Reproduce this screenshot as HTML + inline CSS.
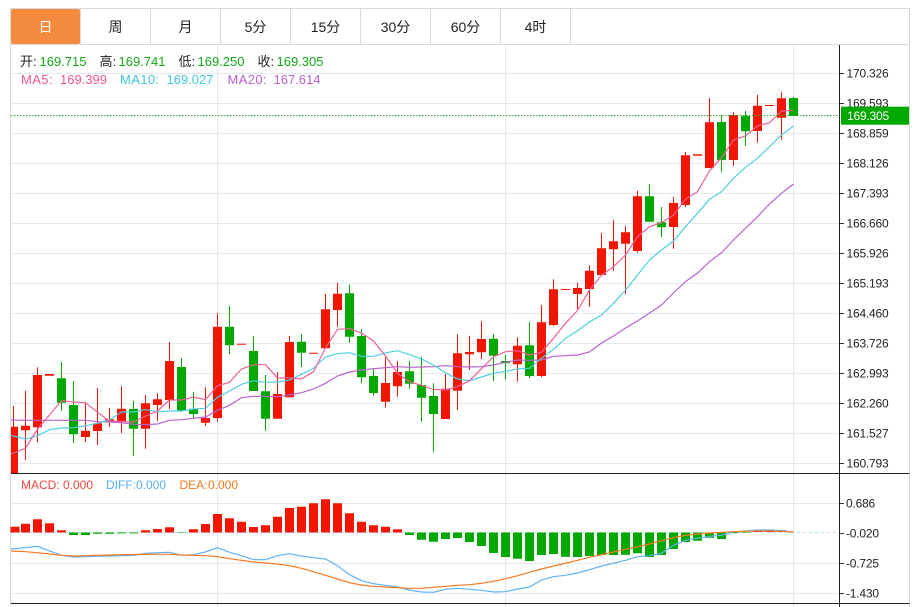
<!DOCTYPE html>
<html><head><meta charset="utf-8"><style>
html,body{margin:0;padding:0;background:#fff;width:916px;height:607px;overflow:hidden}
svg{display:block}
text{font-family:"Liberation Sans","Noto Sans CJK SC",sans-serif}
.ax{font-size:12px;fill:#222;letter-spacing:-.2px}
.h{font-size:13px}
.ml{font-size:13px;letter-spacing:.4px}
.t{font-size:14px;fill:#222;text-anchor:middle}
.m{font-size:12px}
</style></head><body>
<svg width="916" height="607" viewBox="0 0 916 607" xmlns="http://www.w3.org/2000/svg">
<defs><clipPath id="c"><rect x="11" y="45" width="828" height="428"/></clipPath></defs>
<rect width="916" height="607" fill="#fff"/>
<!-- frame -->
<path d="M10.5 607V8.5H909.5V607M10.5 44.5H909.5M80.5 9V44M150.5 9V44M220.5 9V44M290.5 9V44M360.5 9V44M430.5 9V44M500.5 9V44M570.5 9V44" fill="none" stroke="#d9d9d9"/>
<rect x="11" y="9" width="69" height="35" rx="2" fill="#f58b3f"/>
<text class="t" x="45.5" y="32" style="fill:#fff">日</text>
<text class="t" x="115.5" y="32">周</text>
<text class="t" x="185.5" y="32">月</text>
<text class="t" x="255.5" y="32">5分</text>
<text class="t" x="325.5" y="32">15分</text>
<text class="t" x="395.5" y="32">30分</text>
<text class="t" x="465.5" y="32">60分</text>
<text class="t" x="535.5" y="32">4时</text>
<!-- grid -->
<path d="M11 73.5H839M11 103.5H839M11 133.5H839M11 163.5H839M11 193.5H839M11 223.5H839M11 253.5H839M11 283.5H839M11 313.5H839M11 343.5H839M11 373.5H839M11 403.5H839M11 433.5H839M11 463.5H839M11 503.5H839M11 563.5H839M11 593.5H839M217.5 45V607M505.5 45V607M793.5 45V607" fill="none" stroke="#e3e9ee"/>
<!-- candles -->
<g clip-path="url(#c)">
<path fill="none" stroke="#f31500" d="M13.5 406V473M25.5 390.7V460M37.5 367.3V442.3M85.5 403.3V442M97.5 388V445M109.5 407.7V427M121.5 386.3V433M145.5 395V448.7M157.5 393.3V421M169.5 342V409M205.5 387.3V425.7M217.5 313.3V421.7M277.5 372.3V418.7M289.5 336V397.3M325.5 294V348.3M337.5 282.7V326.7M385.5 357.3V407.7M397.5 361.3V396.7M445.5 374V419M457.5 334.3V410M469.5 335.7V369.7M481.5 321.3V359M517.5 337.3V381.3M541.5 305V377.3M553.5 279.3V326M577.5 282.7V309.3M589.5 265.3V306.7M601.5 233V275M613.5 220.3V270.7M625.5 226V294M637.5 190.7V252.7M673.5 196.7V248.7M685.5 152V207M709.5 98.3V168M733.5 112.3V165.7M757.5 94.7V142.7M781.5 92.3V139.7"/>
<path fill="none" stroke="#f31500" stroke-width="9" d="M13.5 426.7V473M25.5 425.7V430.3M37.5 375V427.3M49.5 374V375.7M85.5 430.7V437M97.5 423.3V431M109.5 419.3V421.3M121.5 408.7V421.3M145.5 403.3V428.7M157.5 399.3V405M169.5 361V400M205.5 418V422.7M217.5 326.7V418M241.5 343.7V344.7M277.5 394V418.7M289.5 342V397.3M313.5 352.7V353.7M325.5 309.3V348.3M337.5 293.7V310M385.5 383V401.7M397.5 372V386.3M445.5 388.7V419M457.5 353.3V390.7M469.5 352V354.3M481.5 339V352.3M517.5 345.7V364.3M541.5 322.3V376M553.5 289.3V325M565.5 289V290M577.5 288V294M589.5 270.7V289M601.5 248.3V275M613.5 241.3V249.3M625.5 232.3V243.7M637.5 196.3V251M673.5 203V227M685.5 155.3V205M697.5 154.3V155.7M709.5 122.3V168M733.5 115V160M757.5 105.7V131M769.5 105V106M781.5 98.3V117.7"/>
<path fill="none" stroke="#00a800" d="M61.5 362V410.7M73.5 381V443M133.5 401V455.7M181.5 358.3V411.7M193.5 391.7V418.3M229.5 306V354.3M253.5 336V391M265.5 375V430.7M301.5 334.3V367M349.5 284.7V342.7M361.5 329.3V383.3M373.5 369.3V395.7M409.5 360.7V388.7M421.5 356.7V421.7M433.5 383.3V451.7M493.5 334.3V381M505.5 355V379.3M529.5 322V378.3M649.5 184V221.7M661.5 207V237M721.5 115.3V171.7M745.5 111V145.7M793.5 97V116"/>
<path fill="none" stroke="#00a800" stroke-width="9" d="M61.5 378.3V402.7M73.5 405V434.3M133.5 409V428.7M181.5 367V411M193.5 408.7V414M229.5 326.7V345.3M253.5 351V391M265.5 391.3V418.7M301.5 341.7V352.7M349.5 293.3V336.7M361.5 336V377.3M373.5 376V393M409.5 371.3V383.7M421.5 385V397.7M433.5 396V414M493.5 338.7V355.7M505.5 361V363.3M529.5 345.3V376M649.5 196.3V221.7M661.5 222.3V227.3M721.5 122V160M745.5 116V131.3M793.5 98V116"/>
<!-- MA -->
<polyline fill="none" stroke="#b862cf" stroke-width="1.2" points="11,420 25.5,420.3 49.5,420.3 73.5,420.3 85.5,420.3 97.5,421.7 109.5,422 121.5,422.7 133.5,424.3 145.5,424.7 157.5,424 169.5,420.3 181.5,419.7 193.5,418.3 205.5,417 217.5,410.3 229.5,405.3 241.5,397.7 253.5,396.3 265.5,396.3 277.5,396.7 289.5,395 301.5,392.7 313.5,389 325.5,383.3 337.5,376 349.5,372 361.5,370 373.5,368.7 385.5,367.7 397.5,366.7 409.5,367.3 421.5,367 433.5,366.7 445.5,365.7 457.5,366.7 469.5,367 481.5,366.7 493.5,365 505.5,362.3 517.5,360 529.5,360.3 541.5,360 553.5,356.3 565.5,355.7 577.5,355 589.5,352 601.5,343 613.5,336 625.5,328 637.5,321 649.5,313 661.5,305 673.5,293 685.5,281.7 697.5,273 709.5,261.7 721.5,252.7 733.5,240 745.5,228.3 757.5,216.7 769.5,204 781.5,193.3 793.5,184"/>
<polyline fill="none" stroke="#4dd0e4" stroke-width="1.2" points="11,435.5 25.5,439 37.5,435.7 49.5,429.7 61.5,428 73.5,427.7 85.5,425.7 97.5,423.3 109.5,420 121.5,412 133.5,412 145.5,409.7 157.5,411.7 169.5,411 181.5,411 193.5,409 205.5,408.3 217.5,397.3 229.5,391 241.5,384.3 253.5,380.7 265.5,382.3 277.5,382 289.5,380 301.5,374.3 313.5,368.3 325.5,357 337.5,353.7 349.5,352.7 361.5,356.3 373.5,356.3 385.5,353 397.5,350.7 409.5,354.7 421.5,359 433.5,365 445.5,372.7 457.5,379 469.5,380.7 481.5,377 493.5,373.3 505.5,371.3 517.5,369 529.5,368.3 541.5,358.3 553.5,349.3 565.5,338.3 577.5,330.7 589.5,322 601.5,315 613.5,303.3 625.5,290 637.5,275 649.5,260 661.5,250 673.5,241 685.5,226.7 697.5,213.3 709.5,199.3 721.5,191.7 733.5,178.3 745.5,167.3 757.5,158.3 769.5,146.7 781.5,135 793.5,126"/>
<polyline fill="none" stroke="#f0609a" stroke-width="1.2" points="11,454 25.5,448.3 37.5,429 49.5,415 61.5,400.7 73.5,402 85.5,402.7 97.5,412.3 109.5,421 121.5,421.7 133.5,422 145.5,416 157.5,411 169.5,400 181.5,400 193.5,397 205.5,399.7 217.5,385.7 229.5,382.3 241.5,369 253.5,364.7 265.5,364.7 277.5,378 289.5,377.7 301.5,379 313.5,371.7 325.5,348 337.5,329.3 349.5,328.7 361.5,333 373.5,341 385.5,356 397.5,373.3 409.5,381.7 421.5,385.3 433.5,389.3 445.5,390 457.5,386.7 469.5,380.7 481.5,368.7 493.5,356.7 505.5,351.7 517.5,350.7 529.5,355 541.5,352.3 553.5,338.3 565.5,323.3 577.5,310.5 589.5,290 601.5,275.3 613.5,266.7 625.5,255 637.5,236.7 649.5,226.7 661.5,222.7 673.5,215 685.5,199.3 697.5,191.7 709.5,171 721.5,157.7 733.5,140 745.5,136 757.5,126 769.5,122.7 781.5,111 793.5,110.3"/>
</g>
<!-- MACD bars -->
<path d="M11 532.5H839" fill="none" stroke="#b4e2f4" stroke-dasharray="3 3"/>
<path fill="none" stroke="#f31500" stroke-width="9" d="M15 526.7V532.5M25.5 523.7V532.5M37.5 519.3V532.5M49.5 523.3V532.5M61.5 530.3V532.5M145.5 530.3V532.5M157.5 529V532.5M169.5 527.3V532.5M193.5 529.3V532.5M205.5 524V532.5M217.5 514V532.5M229.5 518.3V532.5M241.5 521.7V532.5M253.5 527V532.5M265.5 525.3V532.5M277.5 516.7V532.5M289.5 508V532.5M301.5 506.7V532.5M313.5 503.3V532.5M325.5 499.3V532.5M337.5 503.3V532.5M349.5 513.3V532.5M361.5 521.7V532.5M373.5 525.3V532.5M385.5 526.7V532.5M397.5 529.3V532.5M757.5 530V532M769.5 529.7V532M781.5 530.3V532"/>
<path fill="none" stroke="#00a800" stroke-width="9" d="M73.5 532.5V535M85.5 532.5V535M97.5 532.5V533.7M109.5 532.5V533.7M121.5 532.5V533.4M133.5 532.5V533.4M181.5 532.5V533M409.5 532.5V535M421.5 532.5V539.7M433.5 532.5V541.7M445.5 532.5V539M457.5 532.5V538M469.5 532.5V542M481.5 532.5V546M493.5 532.5V553M505.5 532.5V557M517.5 532.5V558.7M529.5 532.5V561M541.5 532.5V555M553.5 532.5V554M565.5 532.5V556.7M577.5 532.5V557M589.5 532.5V556M601.5 532.5V555M613.5 532.5V555M625.5 532.5V554.7M637.5 532.5V553.3M649.5 532.5V557M661.5 532.5V555M673.5 532.5V549M685.5 532.5V542M697.5 532.5V540.7M709.5 532.5V537.7M721.5 532.5V539M733.5 532.5V533.3M745.5 532.5V533"/>
<!-- DIFF -->
<polyline fill="none" stroke="#5fb2f6" stroke-width="1.2" points="11,549 25.5,547.7 37.5,546.3 49.5,551 61.5,555.3 73.5,557 85.5,556.7 97.5,556.3 109.5,556 121.5,555.7 133.5,555.3 145.5,553.3 157.5,552.7 169.5,552.3 181.5,555.3 193.5,554.7 205.5,552 217.5,547.7 229.5,552.3 241.5,555.7 253.5,559.7 265.5,559.7 277.5,555.7 289.5,553.7 301.5,556 313.5,557.7 325.5,559 337.5,565.7 349.5,574.7 361.5,580.7 373.5,583.7 385.5,585.3 397.5,587 409.5,590 421.5,592 433.5,592.3 445.5,589.3 457.5,588.3 469.5,589.3 481.5,590.3 493.5,592 505.5,591.7 517.5,589 529.5,587 541.5,580 553.5,576.7 565.5,575.3 577.5,573 589.5,569.7 601.5,566 613.5,563.3 625.5,560.3 637.5,556.7 649.5,555.7 661.5,553.3 673.5,545.3 685.5,540.3 697.5,538.3 709.5,536.3 721.5,535.3 733.5,532 745.5,531 757.5,530 769.5,530 781.5,530.7 793.5,532"/>
<!-- DEA -->
<polyline fill="none" stroke="#f9781e" stroke-width="1.2" points="11,551 25.5,551.7 37.5,552.7 49.5,554 61.5,555.3 73.5,556 85.5,555.7 97.5,555.3 109.5,555 121.5,554.7 133.5,554.5 145.5,554.3 157.5,554.2 169.5,554.3 181.5,555 193.5,555.3 205.5,555.7 217.5,556.7 229.5,558.7 241.5,560.3 253.5,562 265.5,563 277.5,564 289.5,565.7 301.5,568.3 313.5,571.7 325.5,575.3 337.5,579 349.5,582.7 361.5,585 373.5,586.3 385.5,587 397.5,587.7 409.5,588.3 421.5,588.3 433.5,587.3 445.5,586.3 457.5,585.3 469.5,584.7 481.5,583.3 493.5,581.3 505.5,578.7 517.5,575.7 529.5,572.3 541.5,569 553.5,566 565.5,563.3 577.5,560.3 589.5,557.3 601.5,554.7 613.5,552 625.5,549.3 637.5,546.7 649.5,544 661.5,540.7 673.5,537.7 685.5,535.3 697.5,534 709.5,533 721.5,532.3 733.5,531.7 745.5,531.3 757.5,531 769.5,531 781.5,531.3 793.5,532"/>
<!-- axes -->
<path d="M839.5 45V607M11 473.5H909.5M11 603.5H909.5" fill="none" stroke="#222"/>
<path d="M840 73.5h4M840 103.5h4M840 133.5h4M840 163.5h4M840 193.5h4M840 223.5h4M840 253.5h4M840 283.5h4M840 313.5h4M840 343.5h4M840 373.5h4M840 403.5h4M840 433.5h4M840 463.5h4M840 503.5h4M840 533.5h4M840 563.5h4M840 593.5h4" fill="none" stroke="#333"/>
<g>
<text class="ax" x="846.5" y="77.5">170.326</text>
<text class="ax" x="846.5" y="107.5">169.593</text>
<text class="ax" x="846.5" y="137.5">168.859</text>
<text class="ax" x="846.5" y="167.5">168.126</text>
<text class="ax" x="846.5" y="197.5">167.393</text>
<text class="ax" x="846.5" y="227.5">166.660</text>
<text class="ax" x="846.5" y="257.5">165.926</text>
<text class="ax" x="846.5" y="287.5">165.193</text>
<text class="ax" x="846.5" y="317.5">164.460</text>
<text class="ax" x="846.5" y="347.5">163.726</text>
<text class="ax" x="846.5" y="377.5">162.993</text>
<text class="ax" x="846.5" y="407.5">162.260</text>
<text class="ax" x="846.5" y="437.5">161.527</text>
<text class="ax" x="846.5" y="467.5">160.793</text>
<text class="ax" x="846" y="507.5">0.686</text>
<text class="ax" x="846" y="537.5">-0.020</text>
<text class="ax" x="846" y="567.5">-0.725</text>
<text class="ax" x="846" y="597.5">-1.430</text>
</g>
<!-- last price -->
<path d="M11 115.5H839" fill="none" stroke="#22b022" stroke-dasharray="1.5 1.5"/>
<rect x="841" y="106.7" width="68" height="18" fill="#00a800"/>
<text class="ax" x="847" y="120" style="fill:#fff">169.305</text>
<!-- legends -->
<text class="h" x="20" y="66" fill="#222">开:</text><text class="h" x="39.5" y="66" fill="#14aa14">169.715</text>
<text class="h" x="99.5" y="66" fill="#222">高:</text><text class="h" x="118.5" y="66" fill="#14aa14">169.741</text>
<text class="h" x="178.5" y="66" fill="#222">低:</text><text class="h" x="197.5" y="66" fill="#14aa14">169.250</text>
<text class="h" x="257.5" y="66" fill="#222">收:</text><text class="h" x="276.5" y="66" fill="#14aa14">169.305</text>
<text class="ml" x="21" y="84" fill="#f4588a">MA5:</text><text class="h" x="60" y="84" fill="#f4588a">169.399</text>
<text class="ml" x="120" y="84" fill="#40c8e0">MA10:</text><text class="h" x="166.5" y="84" fill="#40c8e0">169.027</text>
<text class="ml" x="227.5" y="84" fill="#b860d0">MA20:</text><text class="h" x="273.5" y="84" fill="#b860d0">167.614</text>
<text class="m" x="21" y="489" fill="#f44336">MACD:</text><text class="m" x="63" y="489" fill="#f44336">0.000</text>
<text class="m" x="106" y="489" fill="#58aef5">DIFF:</text><text class="m" x="136" y="489" fill="#58aef5">0.000</text>
<text class="m" x="179.5" y="489" fill="#f9781e">DEA:</text><text class="m" x="208" y="489" fill="#f9781e">0.000</text>
</svg>
</body></html>
